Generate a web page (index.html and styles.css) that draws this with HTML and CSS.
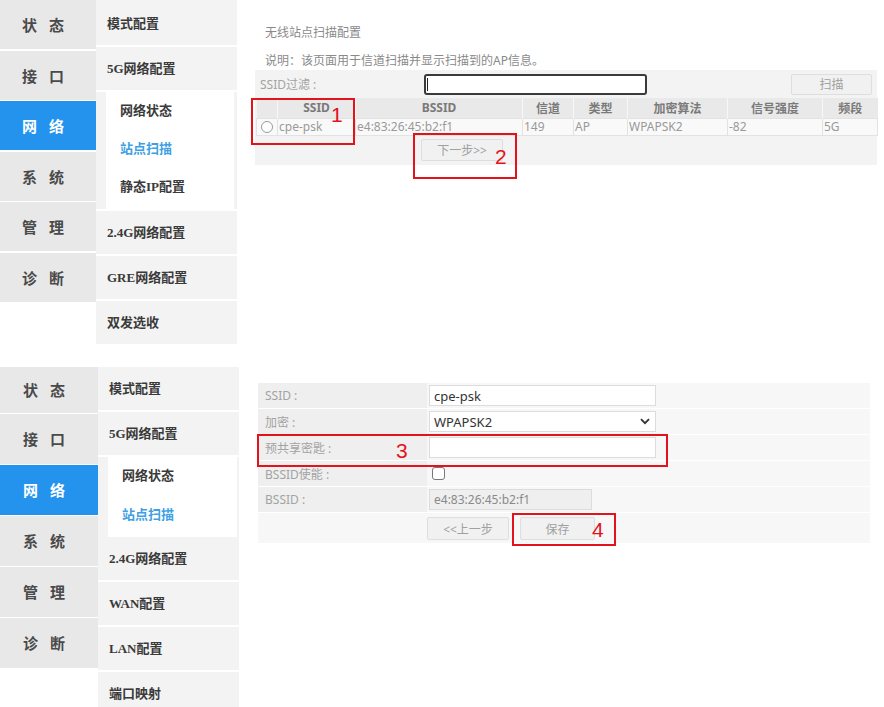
FILE: index.html
```html
<!DOCTYPE html>
<html lang="zh-CN">
<head>
<meta charset="utf-8">
<title>无线站点扫描配置</title>
<link rel="stylesheet" href="styles.css">
</head>
<body>
<div class="page">
  <section class="panel panel-top">
    <nav class="nav">
      <div class="nav-item">状态</div>
      <div class="nav-item">接口</div>
      <div class="nav-item active">网络</div>
      <div class="nav-item">系统</div>
      <div class="nav-item">管理</div>
      <div class="nav-item">诊断</div>
    </nav>
    <div class="sub">
      <div class="sub-item">模式配置</div>
      <div class="sub-item">5G网络配置</div>
      <div class="sub-group">
        <div class="sub-box">
          <div class="sub-link">网络状态</div>
          <div class="sub-link active">站点扫描</div>
          <div class="sub-link">静态IP配置</div>
        </div>
      </div>
      <div class="sub-item">2.4G网络配置</div>
      <div class="sub-item">GRE网络配置</div>
      <div class="sub-item">双发选收</div>
    </div>
    <main class="content">
      <div class="title">无线站点扫描配置</div>
      <div class="desc">说明：该页面用于信道扫描并显示扫描到的AP信息。</div>
      <div class="scan-box">
        <div class="filter-row">
          <span class="filter-label">SSID过滤 :</span>
          <div class="filter-input"><span class="caret"></span></div>
          <span class="spacer"></span>
          <div class="btn btn-scan">扫描</div>
        </div>
        <table class="ap-table">
          <colgroup>
            <col class="c-radio"><col class="c-ssid"><col class="c-bssid"><col class="c-ch"><col class="c-type"><col class="c-enc"><col class="c-sig"><col class="c-band">
          </colgroup>
          <thead>
            <tr><th></th><th>SSID</th><th>BSSID</th><th>信道</th><th>类型</th><th>加密算法</th><th>信号强度</th><th>频段</th></tr>
          </thead>
          <tbody>
            <tr><td class="radio-cell"><span class="radio"></span></td><td>cpe-psk</td><td>e4:83:26:45:b2:f1</td><td>149</td><td>AP</td><td>WPAPSK2</td><td>-82</td><td>5G</td></tr>
          </tbody>
        </table>
        <div class="next-row">
          <div class="btn btn-next">下一步&gt;&gt;</div>
        </div>
      </div>
    </main>
  </section>

  <section class="panel panel-bottom">
    <nav class="nav">
      <div class="nav-item">状态</div>
      <div class="nav-item">接口</div>
      <div class="nav-item active">网络</div>
      <div class="nav-item">系统</div>
      <div class="nav-item">管理</div>
      <div class="nav-item">诊断</div>
    </nav>
    <div class="sub">
      <div class="sub-item">模式配置</div>
      <div class="sub-item">5G网络配置</div>
      <div class="sub-group">
        <div class="sub-box">
          <div class="sub-link">网络状态</div>
          <div class="sub-link active">站点扫描</div>
        </div>
      </div>
      <div class="sub-item">2.4G网络配置</div>
      <div class="sub-item">WAN配置</div>
      <div class="sub-item">LAN配置</div>
      <div class="sub-item">端口映射</div>
    </div>
    <main class="content content-form">
      <div class="form">
        <div class="form-row">
          <div class="f-label">SSID :</div>
          <div class="f-value"><div class="field">cpe-psk</div></div>
        </div>
        <div class="form-row">
          <div class="f-label">加密 :</div>
          <div class="f-value">
            <div class="field select">WPAPSK2
              <svg class="chev" width="10" height="7" viewBox="0 0 10 7"><path d="M1 1.2 L5 5.2 L9 1.2" fill="none" stroke="#333" stroke-width="1.8"/></svg>
            </div>
          </div>
        </div>
        <div class="form-row">
          <div class="f-label">预共享密匙 :</div>
          <div class="f-value"><div class="field"></div></div>
        </div>
        <div class="form-row">
          <div class="f-label">BSSID使能 :</div>
          <div class="f-value"><span class="checkbox"></span></div>
        </div>
        <div class="form-row">
          <div class="f-label">BSSID :</div>
          <div class="f-value"><div class="field disabled">e4:83:26:45:b2:f1</div></div>
        </div>
        <div class="form-row btn-row">
          <div class="f-label"></div>
          <div class="f-value">
            <div class="btn btn-prev">&lt;&lt;上一步</div>
            <div class="btn btn-save">保存</div>
          </div>
        </div>
      </div>
    </main>
  </section>

  <div class="mark mark1"></div>
  <div class="num num1">1</div>
  <div class="mark mark2"></div>
  <div class="num num2">2</div>
  <div class="mark mark3"></div>
  <div class="num num3">3</div>
  <div class="mark mark4"></div>
  <div class="num num4">4</div>
</div>
</body>
</html>
```

FILE: styles.css
```css
* { box-sizing: border-box; }
body {
  margin: 0;
  background: #fff;
  font-family: "Noto Sans", "Noto Sans CJK SC", sans-serif;
}
.page {
  position: relative;
  width: 884px;
  height: 707px;
  overflow: hidden;
}
.panel { display: flex; }
.panel-top { height: 345px; }
.panel-bottom { margin-top: 22px; height: 345px; }

/* left nav */
.nav {
  width: 96px;
  display: flex;
  flex-direction: column;
  gap: 1.5px;
  flex: none;
}
.panel-bottom .nav { width: 98px; }
.nav-item {
  height: 49px;
  background: #e8e8e8;
  display: flex;
  align-items: center;
  justify-content: center;
  font: 700 15px "Noto Sans CJK SC", sans-serif;
  color: #4a4a4a;
  letter-spacing: 12px;
  padding-left: 2px;
  flex: none;
}
.nav-item.active { background: #2393ee; color: #fff; }
.panel-bottom .nav-item { height: 49.5px; }
.panel-bottom .nav-item:first-child { height: 45.5px; }

/* second-level nav */
.sub {
  width: 141px;
  display: flex;
  flex-direction: column;
  flex: none;
}
.sub-item {
  height: 43px;
  margin-bottom: 2px;
  background: #f3f3f3;
  display: flex;
  align-items: center;
  padding: 0 0 2px 11px;
  font: 700 13px "Liberation Serif", "Noto Sans CJK SC", serif;
  color: #3a3a3a;
  flex: none;
}
.panel-top .sub-item:first-child { height: 45px; padding-bottom: 0; }
.sub-group {
  background: #f3f3f3;
  padding: 0 3px 0 10px;
  margin-bottom: 2px;
  flex: none;
}
.sub-box { background: #fff; padding-bottom: 3px; }
.sub-link {
  height: 38px;
  display: flex;
  align-items: center;
  padding: 0 0 4px 14px;
  font: 700 13px "Liberation Serif", "Noto Sans CJK SC", serif;
  color: #3a3a3a;
}
.sub-link.active { color: #3f9fe3; }

.panel-bottom .sub-item { height: 43px; margin-bottom: 2px; }
.panel-bottom .sub-group { padding-right: 2px; margin-bottom: 0; }
.panel-bottom .sub-box { padding-bottom: 2px; }
.panel-bottom .sub-link { height: 39px; }

/* content top */
.content {
  flex: 1;
  padding: 24px 0 0 18px;
  font-size: 12px;
  color: #999;
}
.title { height: 18px; line-height: 18px; padding-left: 10px; color: #8a8a8a; }
.desc { margin-top: 10px; height: 18px; line-height: 18px; padding-left: 10px; color: #8a8a8a; }
.scan-box {
  width: 622px;
  background: #f3f3f3;
}
.filter-row {
  height: 28px;
  display: flex;
  align-items: center;
}
.filter-label { width: 169px; padding-left: 5px; color: #a3a3a3; }
.filter-input {
  width: 223px;
  height: 21px;
  background: #fff;
  border: 2px solid #3a3a3a;
  border-radius: 3px;
  display: flex;
  align-items: center;
  padding-left: 1px;
}
.caret { width: 1px; height: 13px; background: #222; }
.spacer { flex: 1; }
.btn {
  height: 22px;
  background: #f1f1f1;
  border: 1px solid #dedede;
  border-radius: 2px;
  display: flex;
  align-items: center;
  justify-content: center;
  color: #a0a0a0;
  font-size: 12px;
}
.btn-scan { width: 81px; margin-right: 5px; height: 21px; }

.ap-table {
  margin-left: 1px;
  width: 621px;
  table-layout: fixed;
  border-collapse: collapse;
  font-size: 12px;
}
.c-radio { width: 21px; }
.c-ssid { width: 78px; }
.c-bssid { width: 167px; }
.c-ch { width: 51px; }
.c-type { width: 54px; }
.c-enc { width: 100px; }
.c-sig { width: 95px; }
.c-band { width: 55px; }
.ap-table th {
  height: 20px;
  padding: 0;
  background: #e9e9e9;
  border-left: 1px solid #f7f7f7;
  color: #7a7a7a;
  font-weight: 700;
  text-align: center;
}
.ap-table th:first-child { border-left: none; }
.ap-table td {
  height: 17px;
  padding: 0 0 0 1px;
  background: #f9f9f9;
  border: 1px solid #e2e2e2;
  color: #9a9a9a;
  white-space: nowrap;
  overflow: hidden;
  line-height: 15px;
}
.ap-table td.radio-cell { padding-left: 4px; }
.radio {
  display: block;
  width: 12px;
  height: 12px;
  border: 1px solid #9a9a9a;
  border-radius: 50%;
  background: #fff;
}
.next-row {
  height: 29px;
  padding: 3px 0 0 166px;
}
.btn-next { width: 82px; }

/* bottom form */
.content-form { padding: 16px 0 0 19px; }
.form { width: 612px; }
.form-row {
  display: grid;
  grid-template-columns: 169px 1fr;
  height: 25px;
  margin-bottom: 1px;
}
.f-label {
  background: #efefef;
  padding-left: 7px;
  display: flex;
  align-items: center;
  color: #a3a3a3;
  font-size: 12px;
}
.f-value {
  background: #f7f7f7;
  display: flex;
  align-items: center;
  padding-left: 2px;
}
.field {
  width: 227px;
  height: 21px;
  background: #fff;
  border: 1px solid #dcdcdc;
  display: flex;
  align-items: center;
  padding-left: 4px;
  color: #333;
  font-size: 13px;
}
.field.select { justify-content: space-between; padding-right: 5px; }
.chev { flex: none; }
.field.disabled {
  width: 163px;
  background: #efefef;
  color: #8a8a8a;
  font-size: 12px;
}
.checkbox {
  width: 13px;
  height: 13px;
  margin-left: 3px;
  border: 1px solid #777;
  border-radius: 3px;
  background: #fff;
}
.btn-row { height: 30px; }
.btn-row .f-label, .btn-row .f-value { background: #f7f7f7; }
.btn-row .f-value { padding-left: 0; align-items: flex-start; padding-top: 4px; }
.btn-prev { width: 82px; height: 23px; }
.btn-save { width: 75px; height: 23px; margin-left: 11px; }

/* annotations */
.mark {
  position: absolute;
  border: 2px solid #e3131b;
}
.num {
  position: absolute;
  font: 21px/1 "Liberation Sans", sans-serif;
  color: #e3131b;
}
.mark1 { left: 251px; top: 98px; width: 104px; height: 47px; }
.num1 { left: 331px; top: 104px; }
.mark2 { left: 413px; top: 133px; width: 104px; height: 46px; }
.num2 { left: 495px; top: 146px; }
.mark3 { left: 257px; top: 434px; width: 411px; height: 33px; }
.num3 { left: 396px; top: 440px; }
.mark4 { left: 512px; top: 513px; width: 104px; height: 33px; }
.num4 { left: 592px; top: 519px; }
```
